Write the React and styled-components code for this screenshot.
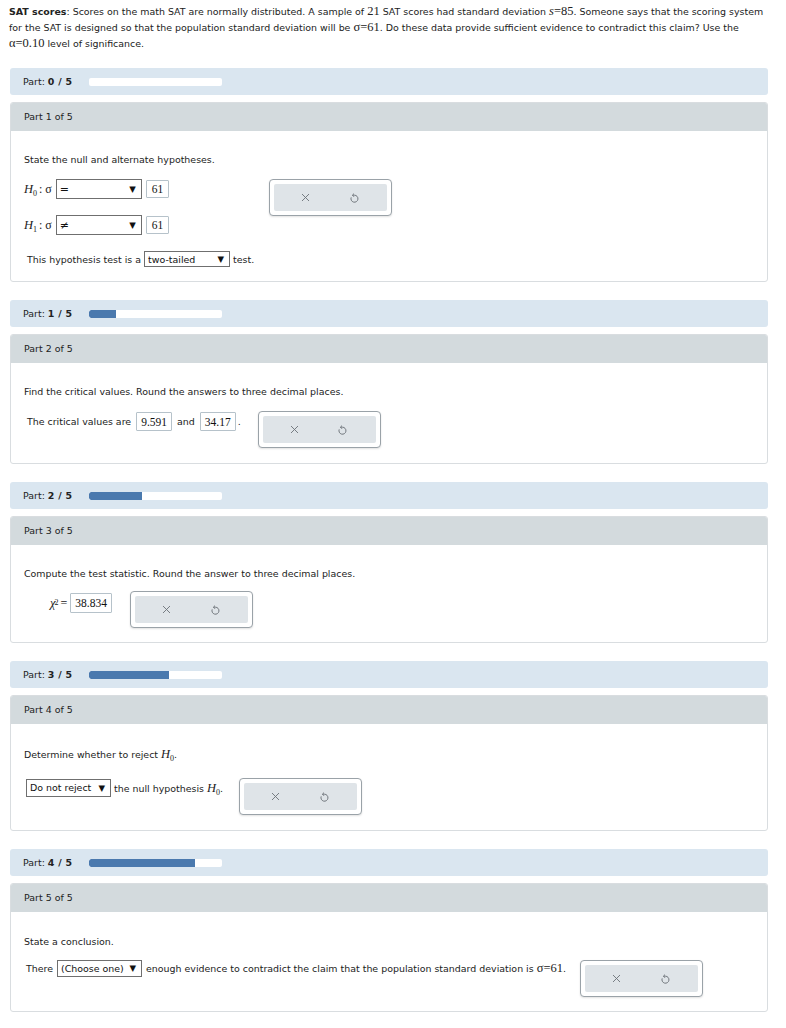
import React from "react";
import styled, { createGlobalStyle } from "styled-components";

const GlobalStyle = createGlobalStyle`
    body {
        margin: 0;
        background: #ffffff;
        font-family: "DejaVu Sans", Verdana, sans-serif;
        font-size: 9.45px;
        color: #222;
    }
`;

const Page = styled.div`
    padding: 4px 18px 16px 10px;
`;

const Intro = styled.p`
    margin: 0 0 17px -1px;
    line-height: 15.8px;
`;

const M = styled.span`
    font-family: "Liberation Serif", "Times New Roman", serif;
    font-size: 12.5px;
    line-height: 1;
    font-style: ${(p) => (p.$it ? "italic" : "normal")};
    i {
        font-style: italic;
    }
`;

const Sub = styled.sub`
    font-size: 8px;
    font-style: normal;
    vertical-align: -3px;
    line-height: 0;
`;

const Progress = styled.div`
    height: 27px;
    background: #dae6f0;
    border-radius: 3px;
    display: flex;
    align-items: center;
    padding-left: 13px;
    margin-bottom: 7px;
`;

const ProgressLabel = styled.span`
    width: 66px;
    b {
        font-weight: bold;
        letter-spacing: 0.3px;
    }
`;

const Track = styled.div`
    width: 133px;
    height: 8px;
    background: #ffffff;
    border-radius: 2px;
    overflow: hidden;
`;

const Fill = styled.div`
    height: 100%;
    background: #4a79ae;
    border-radius: 2px 0 0 2px;
`;

const Panel = styled.div`
    border: 1px solid #d9dde0;
    border-radius: 3px;
    margin-bottom: 18px;
    overflow: hidden;
`;

const PanelHead = styled.div`
    height: 28px;
    background: #d3dadd;
    display: flex;
    align-items: center;
    padding: 0 0 2px 13px;
    box-sizing: border-box;
`;

const PanelBody = styled.div`
    padding: ${(p) => p.$top}px 13px ${(p) => p.$bottom}px 13px;
`;

const Line = styled.div`
    line-height: 14px;
    margin-bottom: ${(p) => p.$mb || 0}px;
`;

const Row = styled.div`
    display: flex;
    align-items: flex-start;
    padding-left: ${(p) => p.$indent || 0}px;
`;

const Inline = styled.div`
    display: flex;
    align-items: center;
    height: ${(p) => p.$h || 20}px;
    gap: ${(p) => p.$gap || 3}px;
    white-space: nowrap;
`;

const Column = styled.div`
    display: flex;
    flex-direction: column;
    gap: ${(p) => p.$gap}px;
`;

const Select = styled.div`
    width: ${(p) => p.$w}px;
    height: ${(p) => p.$h || 20}px;
    box-sizing: border-box;
    border: 1px solid #6f6f6f;
    background: #fff;
    display: flex;
    align-items: center;
    justify-content: space-between;
    padding: 0 5px 0 3px;
    font-size: ${(p) => (p.$sym ? "11px" : "9.45px")};
    color: #111;
    &::after {
        content: "▼";
        font-size: 8.5px;
        color: #111;
    }
`;

const Answer = styled.div`
    height: ${(p) => p.$h || 19}px;
    box-sizing: border-box;
    padding: 0 ${(p) => p.$px || 4}px;
    border: 1px solid #b6c2ca;
    border-radius: 1px;
    background: #fff;
    display: flex;
    align-items: center;
    font-family: "Liberation Serif", "Times New Roman", serif;
    font-size: 11.5px;
    color: #111;
`;

const Label = styled.span`
    display: inline-flex;
    align-items: center;
    gap: 2px;
    font-family: "Liberation Serif", "Times New Roman", serif;
    font-size: 12px;
`;

const Sup = styled.sup`
    font-size: 8px;
    margin-left: -3px;
    vertical-align: 6px;
    line-height: 0;
`;

const Actions = styled.div`
    width: 123px;
    height: 37px;
    box-sizing: border-box;
    margin-left: ${(p) => p.$ml}px;
    margin-top: ${(p) => p.$mt || 0}px;
    border: 1px solid #9aa2a8;
    border-radius: 4px;
    padding: 4px;
    background: #fff;
    box-shadow: 0 1px 2px rgba(0, 0, 0, 0.12);
    flex-shrink: 0;
`;

const ActionsInner = styled.div`
    height: 100%;
    background: #dfe4e8;
    border-radius: 2px;
    display: flex;
    align-items: center;
    justify-content: space-around;
    padding: 0 8px;
`;

const ClearIcon = () => (
    <svg width="9" height="9" viewBox="0 0 9 9">
        <path d="M1 1 L8 8 M8 1 L1 8" stroke="#6b7177" strokeWidth="0.9" fill="none" />
    </svg>
);

const UndoIcon = () => (
    <svg width="11" height="12" viewBox="0 0 11 12">
        <path d="M5.5 3.2 A3.5 3.5 0 1 1 2.2 5.4" stroke="#6b7177" strokeWidth="0.95" fill="none" />
        <path d="M5.5 3.2 L3.6 3.2" stroke="#6b7177" strokeWidth="0.95" fill="none" />
        <path d="M5 1.6 L3.4 3.2 L5 4.8" stroke="#6b7177" strokeWidth="0.95" fill="none" />
    </svg>
);

const ActionBox = ({ ml, mt }) => (
    <Actions $ml={ml} $mt={mt}>
        <ActionsInner>
            <ClearIcon />
            <UndoIcon />
        </ActionsInner>
    </Actions>
);

const ProgressBar = ({ done }) => (
    <Progress>
        <ProgressLabel>
            Part: <b>{done} / 5</b>
        </ProgressLabel>
        <Track>
            <Fill style={{ width: `${(done / 5) * 100}%` }} />
        </Track>
    </Progress>
);

const H = ({ n }) => (
    <M $it>
        H<Sub>{n}</Sub>
    </M>
);

export default function App() {
    return (
        <Page>
            <GlobalStyle />
            <Intro>
                <b>SAT scores</b>: Scores on the math SAT are normally distributed. A sample of <M>21</M> SAT
                scores had standard deviation{" "}
                <M>
                    <i>s</i>=85
                </M>
                . Someone says that the scoring system for the SAT is designed so that the population standard
                deviation will be <M>σ=61</M>. Do these data provide sufficient evidence to contradict this claim?
                Use the <M>α=0.10</M> level of significance.
            </Intro>

            <ProgressBar done={0} />
            <Panel>
                <PanelHead>Part 1 of 5</PanelHead>
                <PanelBody $top={22} $bottom={14}>
                    <Line $mb={12}>State the null and alternate hypotheses.</Line>
                    <Row>
                        <Column $gap={16}>
                            <Inline $gap={4}>
                                <Label>
                                    <H n={0} /> : σ
                                </Label>
                                <Select $w={86} $sym>=</Select>
                                <Answer $h={18} $px={5}>61</Answer>
                            </Inline>
                            <Inline $gap={4}>
                                <Label>
                                    <H n={1} /> : σ
                                </Label>
                                <Select $w={86} $sym>≠</Select>
                                <Answer $h={18} $px={5}>61</Answer>
                            </Inline>
                            <Inline $h={16} $gap={3}>
                                <span>&nbsp;This hypothesis test is a</span>
                                <Select $w={86} $h={16}>two-tailed</Select>
                                <span>test.</span>
                            </Inline>
                        </Column>
                        <ActionBox ml={15} />
                    </Row>
                </PanelBody>
            </Panel>

            <ProgressBar done={1} />
            <Panel>
                <PanelHead>Part 2 of 5</PanelHead>
                <PanelBody $top={22} $bottom={15}>
                    <Line $mb={12}>Find the critical values. Round the answers to three decimal places.</Line>
                    <Row>
                        <Inline $h={21} $gap={5}>
                            <span>&nbsp;The critical values are</span>
                            <Answer>9.591</Answer>
                            <span>and</span>
                            <Answer>34.17</Answer>
                            <span style={{ marginLeft: -3 }}>.</span>
                        </Inline>
                        <ActionBox ml={17} />
                    </Row>
                </PanelBody>
            </Panel>

            <ProgressBar done={2} />
            <Panel>
                <PanelHead>Part 3 of 5</PanelHead>
                <PanelBody $top={22} $bottom={14}>
                    <Line $mb={10}>Compute the test statistic. Round the answer to three decimal places.</Line>
                    <Row $indent={26}>
                        <Inline $h={24} $gap={3}>
                            <Label>
                                <M $it>χ</M>
                                <Sup>2</Sup>=
                            </Label>
                            <Answer $h={20}>38.834</Answer>
                        </Inline>
                        <ActionBox ml={18} />
                    </Row>
                </PanelBody>
            </Panel>

            <ProgressBar done={3} />
            <Panel>
                <PanelHead>Part 4 of 5</PanelHead>
                <PanelBody $top={24} $bottom={15}>
                    <Line $mb={16}>
                        Determine whether to reject <H n={0} />.
                    </Line>
                    <Row $indent={2}>
                        <Inline $h={19} $gap={3}>
                            <Select $w={85} $h={18}>Do not reject</Select>
                            <span>
                                the null hypothesis <H n={0} />.
                            </span>
                        </Inline>
                        <ActionBox ml={16} />
                    </Row>
                </PanelBody>
            </Panel>

            <ProgressBar done={4} />
            <Panel>
                <PanelHead>Part 5 of 5</PanelHead>
                <PanelBody $top={23} $bottom={14}>
                    <Line $mb={10}>State a conclusion.</Line>
                    <Row $indent={2}>
                        <Inline $h={18} $gap={4}>
                            <span>There</span>
                            <Select $w={85} $h={17}>(Choose one)</Select>
                            <span>
                                enough evidence to contradict the claim that the population standard deviation is{" "}
                                <M>σ=61</M>.
                            </span>
                        </Inline>
                        <ActionBox ml={14} mt={1} />
                    </Row>
                </PanelBody>
            </Panel>
        </Page>
    );
}
